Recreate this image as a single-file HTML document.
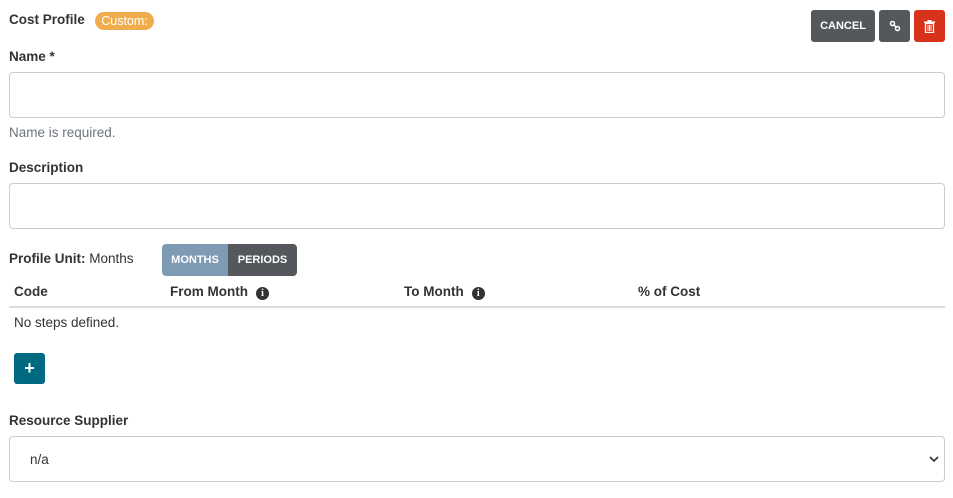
<!DOCTYPE html>
<html><head><style>
*{box-sizing:border-box}
body{margin:0;width:953px;height:498px;background:#fff;font-family:"Liberation Sans",sans-serif;color:#333;position:relative;overflow:hidden}
.a{position:absolute}
.lbl{font-size:13.5px;font-weight:bold;color:#333}
.inp{position:absolute;left:9px;width:936px;height:46px;border:1px solid #ccc;border-radius:4px;background:#fff}
.btn{position:absolute;top:10px;height:32px;border-radius:3px;color:#fff;font-size:11px;font-weight:bold;display:flex;align-items:center;justify-content:center}
.th{position:absolute;top:284px;font-size:13.5px;font-weight:bold}
.info{display:inline-block;width:13px;height:13px;border-radius:50%;background:#333;color:#fff;font-size:10px;text-align:center;line-height:13px;font-family:"Liberation Serif",serif;font-weight:bold;margin-left:8px;vertical-align:0px}
</style></head><body>
<div class="a lbl" style="left:9px;top:12px">Cost Profile</div>
<div class="a" style="left:95px;top:12px;width:59px;height:18px;border-radius:9px;background:#f0ad4e;color:#fff;font-size:12.5px;text-align:center;line-height:18px">Custom:</div>
<div class="btn" style="left:811px;width:64px;background:#54585c">CANCEL</div>
<div class="btn" style="left:879px;width:31px;background:#54585c"><svg width="12" height="12" viewBox="0 0 12 12"><circle cx="3.5" cy="3.5" r="2" fill="none" stroke="#fff" stroke-width="1.5"/><circle cx="8.5" cy="8.5" r="2" fill="none" stroke="#fff" stroke-width="1.5"/><path d="M5 5L7 7" stroke="#fff" stroke-width="1.5"/></svg></div>
<div class="btn" style="left:914px;width:31px;background:#d9321a"><svg width="11" height="13" viewBox="0 0 11 13"><rect x="0" y="1.5" width="11" height="1.5" fill="#fff"/><rect x="3.5" y="0" width="4" height="2" fill="#fff"/><path d="M1.5 3.5h8v9h-8z" fill="none" stroke="#fff" stroke-width="1.3"/><path d="M4 5v6M5.5 5v6M7 5v6" stroke="#fff" stroke-width="0.9"/></svg></div>
<div class="a lbl" style="left:9px;top:49px">Name *</div>
<div class="inp" style="top:72px"></div>
<div class="a" style="left:9px;top:125px;font-size:13.5px;color:#6c757d">Name is required.</div>
<div class="a lbl" style="left:9px;top:160px">Description</div>
<div class="inp" style="top:183px"></div>
<div class="a" style="left:9px;top:251px;font-size:13.5px"><b>Profile Unit:</b> Months</div>
<div class="a" style="left:162px;top:244px;width:66px;height:32px;background:#7f9ab5;border-radius:4px 0 0 4px;color:#fff;font-size:11px;font-weight:bold;text-align:center;line-height:32px">MONTHS</div>
<div class="a" style="left:228px;top:244px;width:69px;height:32px;background:#54585c;border-radius:0 4px 4px 0;color:#fff;font-size:11px;font-weight:bold;text-align:center;line-height:32px">PERIODS</div>
<div class="th" style="left:14px">Code</div>
<div class="th" style="left:170px">From Month<span class="info">i</span></div>
<div class="th" style="left:404px">To Month<span class="info">i</span></div>
<div class="th" style="left:638px">% of Cost</div>
<div class="a" style="left:9px;top:306px;width:936px;height:2px;background:#dcdcdc"></div>
<div class="a" style="left:14px;top:315px;font-size:13.5px">No steps defined.</div>
<div class="a" style="left:14px;top:353px;width:31px;height:31px;background:#006a80;border-radius:3px;color:#fff;font-size:18px;font-weight:bold;text-align:center;line-height:31px">+</div>
<div class="a lbl" style="left:9px;top:413px">Resource Supplier</div>
<div class="inp" style="top:436px"><span class="a" style="left:20px;top:15px;font-size:13.5px">n/a</span><svg class="a" style="right:5px;top:18px" width="10" height="8" viewBox="0 0 10 8"><path d="M1 2l4 4 4-4" fill="none" stroke="#333" stroke-width="1.6"/></svg></div>
</body></html>
